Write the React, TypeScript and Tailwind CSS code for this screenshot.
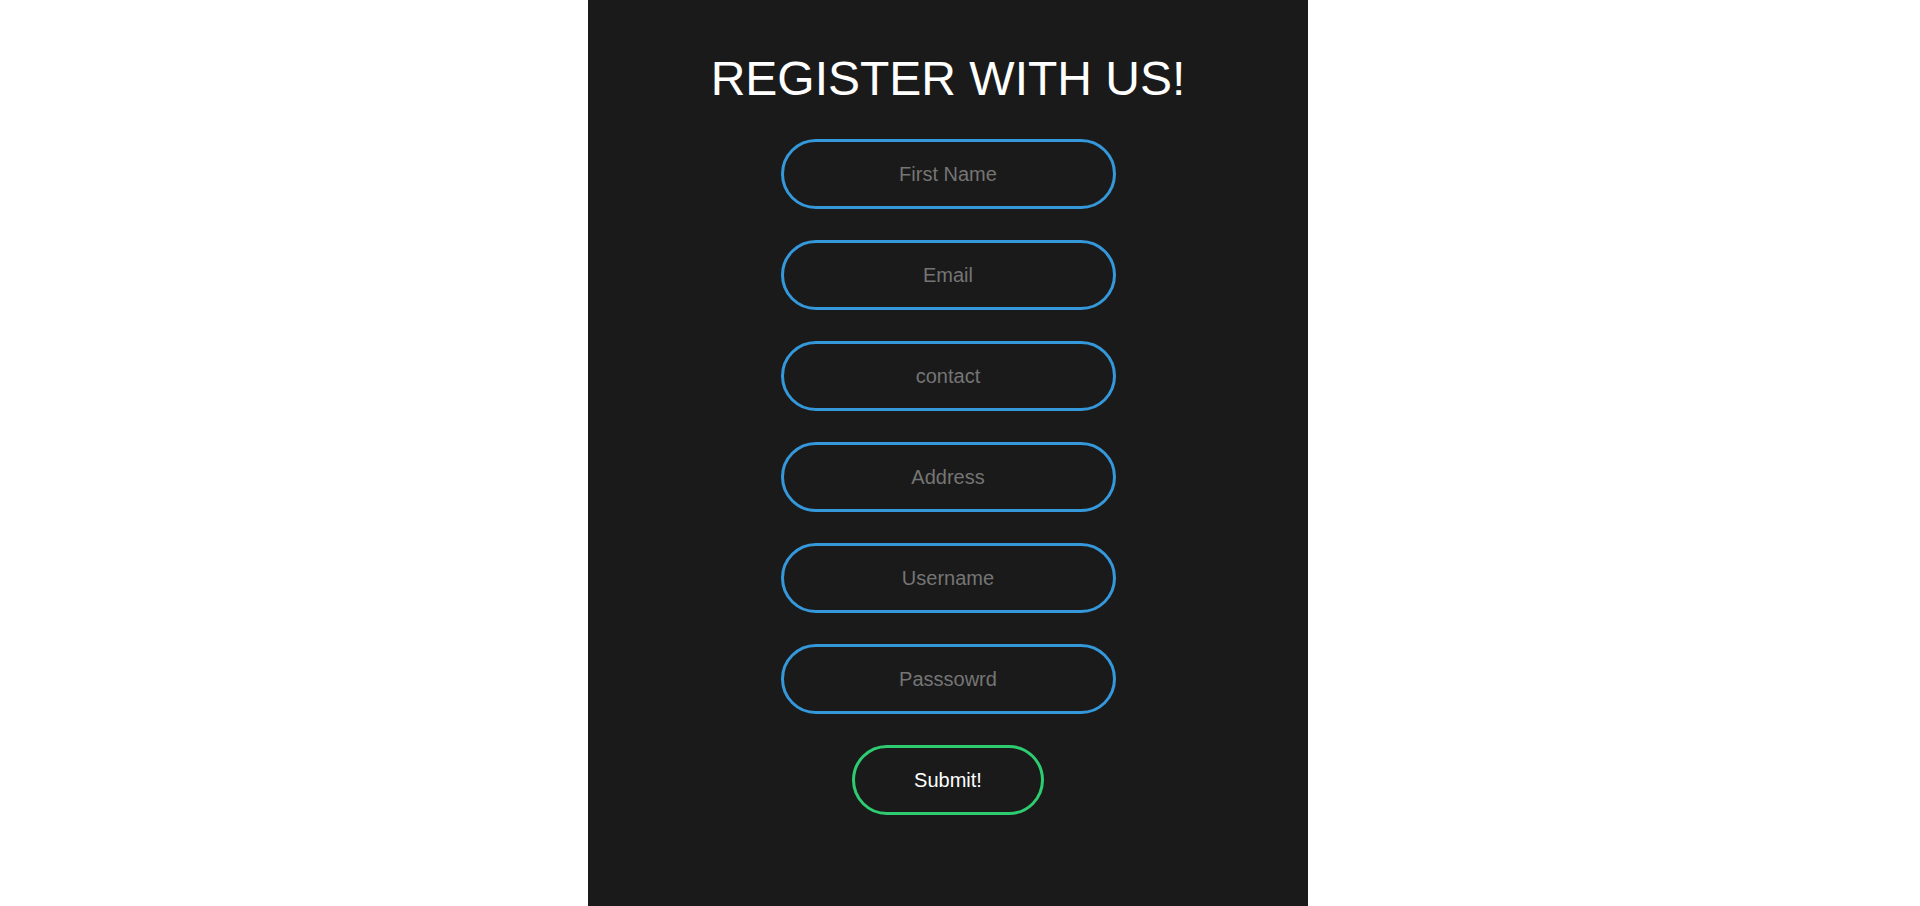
import React from "react";

const fields = ["First Name", "Email", "contact", "Address", "Username", "Passsowrd"];

export default function App() {
  return (
    <div
      className="flex min-h-[906px] w-full justify-center bg-white pr-[24px]"
      style={{ fontFamily: '"Liberation Sans", Arial, sans-serif' }}
    >
      <form
        className="flex min-h-[906px] w-[720px] flex-col items-center bg-[#1a1a1a] pt-[51px]"
        onSubmit={(e) => e.preventDefault()}
      >
        <h1 className="m-0 text-[48px] font-normal leading-[55px] text-white">REGISTER WITH US!</h1>
        <div className="mt-[33px] flex flex-col items-center gap-[31px]">
          {fields.map((f) => (
            <input
              key={f}
              type={f === "Passsowrd" ? "password" : "text"}
              placeholder={f}
              className="box-border h-[70px] w-[335px] rounded-full border-[3px] border-[#3498db] bg-transparent text-center text-[20px] text-white outline-none placeholder:text-[#757575]"
            />
          ))}
          <button
            type="submit"
            className="box-border h-[70px] w-[192px] rounded-full border-[3px] border-[#2ecc71] bg-transparent text-center text-[20px] text-white"
          >
            Submit!
          </button>
        </div>
      </form>
    </div>
  );
}
